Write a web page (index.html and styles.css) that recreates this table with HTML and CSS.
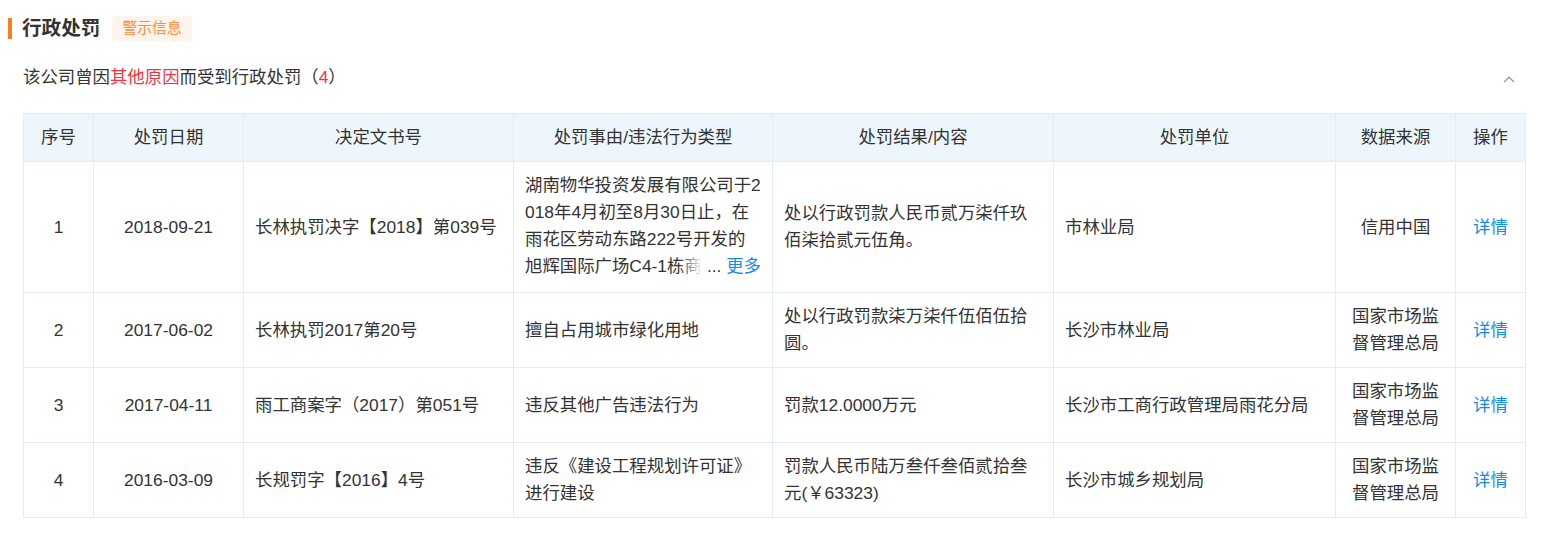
FILE: index.html
```html
<!DOCTYPE html>
<html lang="zh-CN">
<head>
  <meta charset="UTF-8" />
  <meta name="viewport" content="width=device-width, initial-scale=1.0" />
  <title>行政处罚</title>
  <link rel="stylesheet" href="styles.css">
</head>
<body>

  <div class="section">
    <div class="section-head">
      <span class="section-bar"></span>
      <h2>行政处罚</h2>
      <span class="tag">警示信息</span>
    </div>

    <div class="summary">
      <span>该公司曾因<em>其他原因</em>而受到行政处罚（<em>4</em>）</span>
      <svg class="fold" width="12" height="7" viewBox="0 0 12 7">
        <polyline points="1,6 6,1.2 11,6" fill="none" stroke="#8a9bb0" stroke-width="1.2" />
      </svg>
    </div>

    <table class="punish-table">
      <colgroup>
        <col style="width: 70px">
        <col style="width: 150px">
        <col style="width: 270px">
        <col style="width: 259px">
        <col style="width: 281px">
        <col style="width: 282px">
        <col style="width: 120px">
        <col style="width: 70px">
      </colgroup>
      <thead>
        <tr>
          <th>序号</th>
          <th>处罚日期</th>
          <th>决定文书号</th>
          <th>处罚事由/违法行为类型</th>
          <th>处罚结果/内容</th>
          <th>处罚单位</th>
          <th>数据来源</th>
          <th>操作</th>
        </tr>
      </thead>
      <tbody>
        <tr>
          <td class="center">1</td>
          <td class="center">2018-09-21</td>
          <td>长林执罚决字【2018】第039号</td>
          <td>
            <div class="clamp">
              湖南物华投资发展有限公司于2018年4月初至8月30日止，在雨花区劳动东路222号开发的旭辉国际广场C4-1栋商业楼项目建设中，擅自占用城市绿化用地。
              <span class="more">... <a href="#">更多</a></span>
            </div>
          </td>
          <td>处以行政罚款人民币贰万柒仟玖佰柒拾贰元伍角。</td>
          <td>市林业局</td>
          <td class="center">信用中国</td>
          <td class="center"><a href="#">详情</a></td>
        </tr>
        <tr>
          <td class="center">2</td>
          <td class="center">2017-06-02</td>
          <td>长林执罚2017第20号</td>
          <td>擅自占用城市绿化用地</td>
          <td>处以行政罚款柒万柒仟伍佰伍拾圆。</td>
          <td>长沙市林业局</td>
          <td class="center">国家市场监督管理总局</td>
          <td class="center"><a href="#">详情</a></td>
        </tr>
        <tr>
          <td class="center">3</td>
          <td class="center">2017-04-11</td>
          <td>雨工商案字（2017）第051号</td>
          <td>违反其他广告违法行为</td>
          <td>罚款12.0000万元</td>
          <td>长沙市工商行政管理局雨花分局</td>
          <td class="center">国家市场监督管理总局</td>
          <td class="center"><a href="#">详情</a></td>
        </tr>
        <tr>
          <td class="center">4</td>
          <td class="center">2016-03-09</td>
          <td>长规罚字【2016】4号</td>
          <td>违反《建设工程规划许可证》进行建设</td>
          <td>罚款人民币陆万叁仟叁佰贰拾叁元(￥63323)</td>
          <td>长沙市城乡规划局</td>
          <td class="center">国家市场监督管理总局</td>
          <td class="center"><a href="#">详情</a></td>
        </tr>
      </tbody>
    </table>
  </div>

</body>
</html>
```

FILE: styles.css
```css
body {
  font-family: "Liberation Sans", "Noto Sans CJK SC", sans-serif;
  color: #333;
  background-color: #fff;
  margin: 0;
}

.section {
  padding: 16px 17px 0 8px;
}

.section-head {
  display: flex;
  align-items: center;
  height: 25px;
}

.section-bar {
  width: 4px;
  height: 21px;
  background-color: #ff7f17;
}

.section-head h2 {
  margin: 0 0 0 10px;
  font-size: 19.6px;
  font-weight: bold;
  color: #333;
  line-height: 25px;
}

.tag {
  margin-left: 12px;
  padding: 0 10px;
  height: 25px;
  line-height: 25px;
  font-size: 14.8px;
  color: #ff8c3a;
  background-color: #fff4ec;
  border-radius: 3px;
}

.summary {
  display: flex;
  justify-content: space-between;
  align-items: center;
  margin: 23px 0 22px 15px;
  font-size: 17.4px;
  line-height: 27px;
}

.summary em {
  font-style: normal;
  color: #f5313f;
}

.fold {
  margin-right: 11px;
  margin-top: 4px;
}

.punish-table {
  margin-left: 15px;
  width: 1503px;
  border-collapse: collapse;
  table-layout: fixed;
  font-size: 17.4px;
  line-height: 27px;
}

.punish-table th,
.punish-table td {
  border: 1px solid #e3ebf4;
  padding: 10px 11px;
  text-align: left;
  vertical-align: middle;
  word-break: break-all;
}

.punish-table th {
  background-color: #eef6fd;
  font-weight: normal;
  text-align: center;
}

.punish-table td.center {
  text-align: center;
}

.punish-table a {
  color: #128bed;
  text-decoration: none;
}

.clamp {
  position: relative;
  height: 110px;
  overflow: hidden;
}

.clamp .more {
  position: absolute;
  right: 0;
  top: 81px;
  padding-left: 28px;
  background: linear-gradient(to right, rgba(255, 255, 255, 0), #fff 24px);
}
```
